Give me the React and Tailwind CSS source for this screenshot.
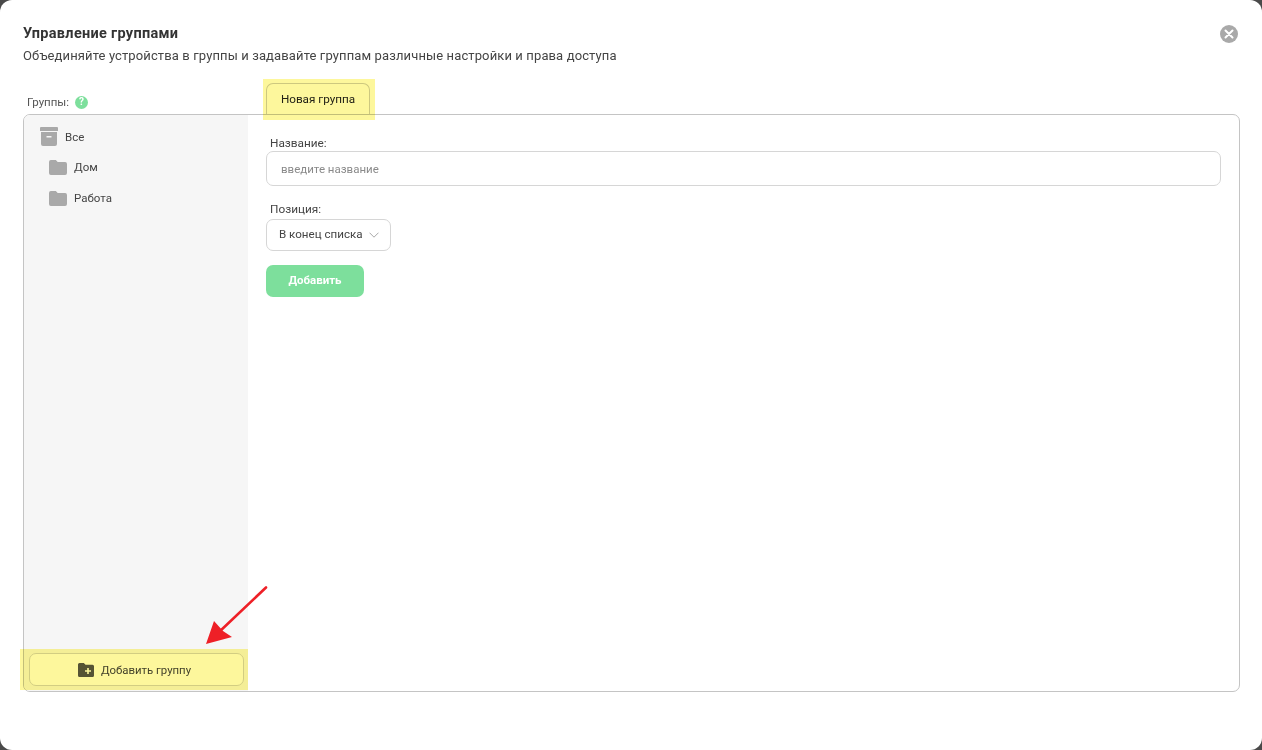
const FolderIcon = () => (
  <svg className="h-[15px] w-[18px] text-[#a9a9a9]" viewBox="0 0 19 15" fill="currentColor" preserveAspectRatio="none">
    <path d="M2 0h5.2l2 2H17a2 2 0 0 1 2 2v9a2 2 0 0 1-2 2H2a2 2 0 0 1-2-2V2a2 2 0 0 1 2-2z" />
  </svg>
);

const ArchiveIcon = () => (
  <svg className="h-[19px] w-[18px] text-[#a9a9a9]" viewBox="0 0 18 19" fill="currentColor">
    <path d="M1 0h16a1 1 0 0 1 1 1v3H0V1a1 1 0 0 1 1-1z" />
    <path fillRule="evenodd" d="M1 5h16v12a2 2 0 0 1-2 2H3a2 2 0 0 1-2-2V5zM6.5 9v1.6h5V9h-5z" />
  </svg>
);

const App = () => {
  return (
    <div className="h-[750px] w-[1262px] overflow-hidden bg-[#4a4a4a] font-['Roboto',sans-serif]">
      <div className="relative flex h-full flex-col rounded-[12px] bg-white pb-[58px] pl-[23px] pr-[22px] pt-[25px] text-[#3a3a3a]">
        <h1 className="text-[14.5px] font-bold leading-[18px] tracking-[0.3px] text-[#333333]">Управление группами</h1>
        <p className="mt-[4px] text-[13px] leading-[18px] tracking-[0.12px] text-[#444444]">
          Объединяйте устройства в группы и задавайте группам различные настройки и права доступа
        </p>

        <button className="absolute right-[24px] top-[25px] flex h-[18px] w-[18px] items-center justify-center rounded-full bg-[#a9a9a9]">
          <svg className="h-[10px] w-[10px]" viewBox="0 0 10 10" stroke="white" strokeWidth="2" strokeLinecap="round">
            <path d="M1.5 1.5l7 7M8.5 1.5l-7 7" />
          </svg>
        </button>

        <div className="mt-[16px] flex h-[33px] items-end">
          <div className="flex w-[243px] items-center gap-[6px] pb-[4px] pl-[4px] text-[11.5px] leading-[16px] text-[#555555]">
            <span>Группы:</span>
            <span className="flex h-[13px] w-[13px] items-center justify-center rounded-full bg-[#7ddf9c] text-[10px] font-bold leading-none text-white">?</span>
          </div>
          <div className="-mb-px flex h-[32px] w-[104px] items-center justify-center rounded-t-[7px] border border-b-0 border-[#cfcfcf] bg-white text-[11.7px] text-[#222222]">
            Новая группа
          </div>
        </div>

        <div className="flex min-h-0 flex-1 overflow-hidden rounded-[7px] border border-[#c4c4c4]">
          <aside className="flex w-[224px] shrink-0 flex-col justify-between bg-[#f6f6f6] pb-[5px] pl-[5px] pr-[4px] pt-[12px]">
            <div className="text-[11.5px] leading-[18px] text-[#444444]">
              <div className="flex h-[19px] items-center gap-[7px] pl-[11px]">
                <ArchiveIcon />
                <span>Все</span>
              </div>
              <div className="mt-[12px] flex h-[18px] items-center gap-[7px] pl-[20px]">
                <FolderIcon />
                <span>Дом</span>
              </div>
              <div className="mt-[13px] flex h-[18px] items-center gap-[7px] pl-[20px]">
                <FolderIcon />
                <span>Работа</span>
              </div>
            </div>
            <button className="flex h-[33px] w-full items-center justify-center gap-[7px] rounded-[7px] border border-[#d4d4d4] bg-white pr-[4px] text-[11.4px] text-[#444444]">
              <svg className="h-[14px] w-[16px] text-[#555555]" viewBox="0 0 16 14" fill="currentColor">
                <path fillRule="evenodd" d="M1.5 0h4.3l1.7 1.8h7A1.5 1.5 0 0 1 16 3.3v9.2a1.5 1.5 0 0 1-1.5 1.5h-13A1.5 1.5 0 0 1 0 12.5v-11A1.5 1.5 0 0 1 1.5 0zM9.2 5H10.8v2.2H13v1.6h-2.2V11H9.2V8.8H7V7.2h2.2V5z" />
              </svg>
              <span className="pt-[2px]">Добавить группу</span>
            </button>
          </aside>

          <section className="flex-1 pl-[18px] pr-[18px] pt-[20px]">
            <label className="block pl-[4px] text-[11.8px] leading-[16px] text-[#444444]">Название:</label>
            <input
              placeholder="введите название"
              className="block h-[35px] w-full rounded-[7px] border border-[#d6d6d6] px-[14px] text-[11.5px] outline-none placeholder:text-[#8a8a8a]"
            />
            <label className="mt-[15px] block pl-[4px] text-[11.8px] leading-[16px] text-[#444444]">Позиция:</label>
            <div className="mt-[2px] flex h-[32px] w-[125px] items-center justify-between rounded-[7px] border border-[#d6d6d6] pl-[12px] pr-[11px] text-[11.6px] text-[#444444]">
              <span>В конец списка</span>
              <svg className="h-[6px] w-[10px]" viewBox="0 0 10 6" fill="none" stroke="#a8a8a8" strokeWidth="1">
                <path d="M0.5 0.7L5 5.2l4.5-4.5" />
              </svg>
            </div>
            <button className="mt-[14px] block h-[32px] w-[98px] rounded-[7px] bg-[#7ddf9c] text-[11.5px] font-bold text-white">
              Добавить
            </button>
          </section>
        </div>

        {/* yellow marker highlights over the tab and the add button */}
        <div className="pointer-events-none absolute left-[263px] top-[79px] z-10 h-[41px] w-[112px] bg-[#fbf25a] opacity-60 mix-blend-multiply" />
        <div className="pointer-events-none absolute left-[20px] top-[649px] z-10 h-[41px] w-[228px] bg-[#fbf25a] opacity-60 mix-blend-multiply" />

        <svg className="pointer-events-none absolute left-[200px] top-[582px] z-10 h-[70px] w-[72px]" viewBox="0 0 72 70">
          <path d="M66 5.5L18 51" stroke="#ee2027" strokeWidth="2.6" strokeLinecap="round" />
          <path d="M6 62L14 39l9 10 9 6z" fill="#ee2027" />
        </svg>
      </div>
    </div>
  );
};

export default App;
